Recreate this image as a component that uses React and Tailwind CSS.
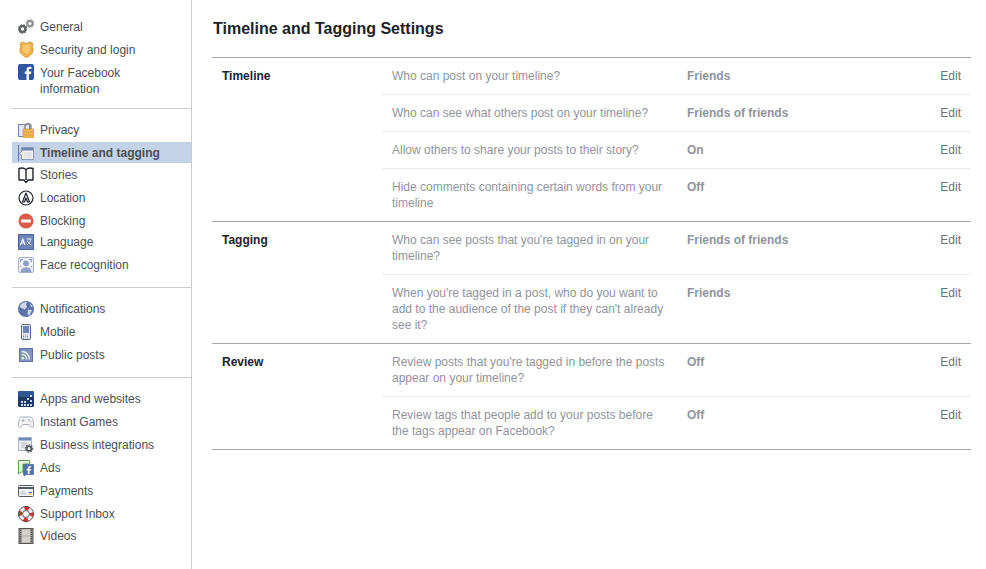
const Gear = ({ cx, cy, r, fill }) => (
  <g>
    <circle cx={cx} cy={cy} r={r * 0.72} fill="none" stroke={fill} strokeWidth={r * 0.56} />
    <circle cx={cx} cy={cy} r={r * 0.95} fill="none" stroke={fill} strokeWidth={r * 0.5} strokeDasharray="1.5 1.1" />
  </g>
);

const icons = {
  general: (
    <>
      <Gear cx={4.5} cy={10} r={4} fill="#5f6266" />
      <Gear cx={12} cy={4.5} r={3.6} fill="#8d9095" />
    </>
  ),
  security: (
    <>
      <path d="M3 0.5 H6 L8.5 1.5 L11 0.5 H14 L15 3 C14 4 14 5 15 6 V9.5 C14 12.5 11 14.3 8.5 15.8 C6 14.3 3 12.5 2 9.5 V6 C3 5 3 4 2 3 Z" fill="#f0b34c" stroke="#cf8e2b" strokeWidth="0.8" />
      <path d="M5 3 H12 V9 L8.5 12.5 L5 9 Z" fill="#f6c76e" />
    </>
  ),
  facebook: (
    <>
      <rect x="0" y="0" width="16" height="16" rx="2" fill="#2f55a4" />
      <path d="M11 16 V10 H13 L13.3 7.6 H11 V6.2 C11 5.4 11.3 5 12.2 5 H13.4 V2.8 H11.6 C9.6 2.8 8.5 4 8.5 5.9 V7.6 H6.8 V10 H8.5 V16 Z" fill="#fff" />
    </>
  ),
  privacy: (
    <>
      <rect x="0.5" y="2.5" width="11" height="12" fill="#e4e9f4" stroke="#6d84b4" />
      <path d="M7 7 V4.5 C7 1 13 1 13 4.5 V7" fill="none" stroke="#8a8d91" strokeWidth="1.6" />
      <rect x="5" y="7" width="11" height="9" fill="#f2b657" stroke="#c98f33" strokeWidth="0.6" />
      <path d="M5 10 H16 M5 13 H16" stroke="#d99d3f" strokeWidth="0.8" />
    </>
  ),
  timeline: (
    <>
      <path d="M0.5 0 V16" stroke="#5f78ad" />
      <path d="M3.5 2.5 H15.5 V14.5 H3.5 V10 L1 8.5 L3.5 7 Z" fill="#f1f1f3" stroke="#8c9cc0" />
      <rect x="4" y="3" width="11" height="2.5" fill="#6d84b4" />
      <path d="M6 8 H13.5 M6 10 H13.5 M6 12 H13.5" stroke="#d4d6da" />
    </>
  ),
  stories: (
    <path d="M8 2.5 C6 0.8 3 0.8 1 1.5 V13 H6 L8 15.5 L10 13 H15 V1.5 C13 0.8 10 0.8 8 2.5 Z M8 2.5 V13" fill="#fff" stroke="#1d2129" strokeWidth="1.4" strokeLinejoin="round" />
  ),
  location: (
    <>
      <circle cx="8" cy="8" r="7" fill="#fff" stroke="#1d2129" strokeWidth="1.2" />
      <path d="M4.5 12 L8 3 L11.5 12 L9.5 12 L8 8 L6.5 12 Z M6.7 9.5 H9.3" fill="#fff" stroke="#1d2129" strokeWidth="1.2" strokeLinejoin="round" />
    </>
  ),
  blocking: (
    <>
      <circle cx="8" cy="8" r="7.5" fill="#dd5b49" />
      <rect x="3" y="6.5" width="10" height="3" rx="0.5" fill="#fff" />
    </>
  ),
  language: (
    <>
      <rect x="0.5" y="0.5" width="15" height="15" fill="#6d84b4" stroke="#4a639a" />
      <path d="M2.5 11 L4.8 5 L7 11 M3.4 9 H6.2" fill="none" stroke="#fff" strokeWidth="1.1" />
      <path d="M8.5 5 H13.5 M11 4 V5 M9 11 C11 9.5 12.3 7.5 12.8 5 M9.3 6.5 C10 8.5 11.5 10 13.5 11" fill="none" stroke="#dfe5f1" strokeWidth="1" />
    </>
  ),
  face: (
    <>
      <rect x="0.5" y="0.5" width="15" height="15" rx="1.5" fill="#eef1f7" stroke="#a3b1cf" />
      <path d="M2.5 5 V2.5 H5 M11 2.5 H13.5 V5 M2.5 9 V10 M13.5 9 V10" fill="none" stroke="#7e93bd" />
      <circle cx="8" cy="6.3" r="2.9" fill="#8ea0c6" />
      <path d="M2.5 15 C3 11 6 10.5 8 10.5 C10 10.5 13 11 13.5 15 Z" fill="#8ea0c6" />
    </>
  ),
  notifications: (
    <>
      <circle cx="8" cy="8" r="8" fill="#5b73a8" />
      <path d="M3 3 C5 1.5 7 1 9 1 L8 3.5 L9 6 L6.5 8.5 L3.5 7 L1.5 6 Z M10 8.5 L14 9 L12 13.5 L10.5 15 L9.5 12 Z M12 2.5 L15 5.5 L13 6 Z" fill="#cfd8ea" />
    </>
  ),
  mobile: (
    <>
      <rect x="3.5" y="0.5" width="9" height="15" rx="1.5" fill="#e9ecf3" stroke="#55688f" />
      <rect x="5" y="2" width="6" height="7" fill="#6d84b4" />
      <path d="M5 11 H11 M5 12.5 H11 M5 14 H11" stroke="#8b93a5" strokeDasharray="1 1" />
    </>
  ),
  rss: (
    <>
      <rect x="1.5" y="1.5" width="13" height="13" fill="#7f94bf" stroke="#5a72a6" />
      <circle cx="4.8" cy="11.2" r="1.3" fill="#e8ecf5" />
      <path d="M3.8 7.4 C6.5 7.4 8.6 9.5 8.6 12.4 M3.8 4.6 C8 4.6 11.4 8 11.4 12.4" fill="none" stroke="#e8ecf5" strokeWidth="1.5" />
    </>
  ),
  apps: (
    <>
      <rect x="0" y="0" width="16" height="16" rx="1.5" fill="#1f3a68" />
      <rect x="0" y="0" width="16" height="6" rx="1.5" fill="#2e5694" />
      <path d="M3 10 h2 v2 h-2 Z M6 10 h2 v2 h-2 Z M3 13 h2 v2 h-2 Z M6 13 h2 v2 h-2 Z M9 13 h2 v2 h-2 Z M9 7 h2 v2 h-2 Z M12 4 h2 v2 h-2 Z M12 9 h2 v2 h-2 Z M12 13 h2 v2 h-2 Z" fill="#c4d6ef" />
    </>
  ),
  games: (
    <>
      <path d="M4 3 H12 C14 3 15 5 15.5 9 C16 13 14.5 14 13.5 13.5 L11 10.5 H5 L2.5 13.5 C1.5 14 0 13 0.5 9 C1 5 2 3 4 3 Z" fill="#f3f4f6" stroke="#a8abb2" />
      <path d="M3.5 6.5 H6.5 M5 5 V8" stroke="#a8abb2" />
      <circle cx="11" cy="6" r="0.9" fill="#8fb4e0" />
      <circle cx="12.7" cy="7.6" r="0.9" fill="#e6b9a6" />
    </>
  ),
  business: (
    <>
      <rect x="0.5" y="0.5" width="13" height="13" fill="#eef0f4" stroke="#a7b3cc" />
      <rect x="1" y="1" width="12" height="2.5" fill="#7189b8" />
      <path d="M3 6 H9 M3 8 H7 M3 10 H6" stroke="#b4b8c1" />
      <circle cx="11" cy="11.5" r="2.4" fill="none" stroke="#55585e" strokeWidth="1.8" />
      <circle cx="11" cy="11.5" r="3.7" fill="none" stroke="#55585e" strokeWidth="1.1" strokeDasharray="1.4 1.4" />
    </>
  ),
  ads: (
    <>
      <path d="M0.5 0.5 H11.5 V4 H5 V12 H3 L0.5 14 Z" fill="#eaf4e2" stroke="#5f9f4a" />
      <path d="M5.5 4.5 H15.5 V14.5 H8.5 L6 16 V14.5 H5.5 Z" fill="#4f6fae" stroke="#3d5a96" strokeWidth="0.6" />
      <path d="M11.5 14 V10.5 H13 L13.2 9 H11.5 V8.2 C11.5 7.7 11.8 7.5 12.3 7.5 H13.2 V6 H12 C10.6 6 9.8 6.8 9.8 8 V9 H8.6 V10.5 H9.8 V14 Z" fill="#fff" />
    </>
  ),
  payments: (
    <>
      <rect x="0.5" y="2.5" width="15" height="11" rx="1" fill="#f3f4f6" stroke="#55585e" />
      <rect x="1" y="4" width="14" height="2" fill="#55585e" />
      <path d="M2.5 9 H7 M2.5 11 H9" stroke="#b4b8c1" />
      <rect x="10.5" y="9" width="3.5" height="1" fill="#5b7bb8" />
      <rect x="10.5" y="10.5" width="3.5" height="1" fill="#e8b33f" />
    </>
  ),
  support: (
    <>
      <circle cx="8" cy="8" r="5.6" fill="none" stroke="#e9e9ec" strokeWidth="4" />
      <circle cx="8" cy="8" r="5.6" fill="none" stroke="#d9332c" strokeWidth="4" strokeDasharray="4.4 4.4" strokeDashoffset="2.2" />
      <circle cx="8" cy="8" r="7.6" fill="none" stroke="#3a3b3f" strokeWidth="0.8" />
      <circle cx="8" cy="8" r="3.4" fill="#fff" stroke="#3a3b3f" strokeWidth="0.8" />
    </>
  ),
  videos: (
    <>
      <rect x="1" y="0.5" width="14" height="15" fill="#a9a6a2" stroke="#55534f" />
      <rect x="4" y="1.5" width="8" height="6" fill="#d4d1cc" />
      <rect x="4" y="8.5" width="8" height="6" fill="#d4d1cc" />
      <path d="M2.5 1.5 V15 M13.5 1.5 V15" stroke="#4b4a47" strokeWidth="1.4" strokeDasharray="1.2 1" />
    </>
  ),
};

const NavIcon = ({ name }) => (
  <svg width="16" height="16" viewBox="0 0 16 16" className="shrink-0">
    {icons[name]}
  </svg>
);

const NavItem = ({ icon, label, h = "h-[23px]", active }) => (
  <div className={`flex items-center pl-[6px] ${h} ${active ? "bg-[#c4d2e7] font-bold" : ""}`}>
    <NavIcon name={icon} />
    <span className="ml-[6px] leading-4">{label}</span>
  </div>
);

const Divider = ({ className }) => <div className={`h-px bg-[#cccccc] ${className}`} />;

const sections = [
  {
    title: "Timeline",
    rows: [
      { q: "Who can post on your timeline?", v: "Friends" },
      { q: "Who can see what others post on your timeline?", v: "Friends of friends" },
      { q: "Allow others to share your posts to their story?", v: "On" },
      { q: "Hide comments containing certain words from your timeline", v: "Off" },
    ],
  },
  {
    title: "Tagging",
    rows: [
      { q: "Who can see posts that you're tagged in on your timeline?", v: "Friends of friends" },
      { q: "When you're tagged in a post, who do you want to add to the audience of the post if they can't already see it?", v: "Friends" },
    ],
  },
  {
    title: "Review",
    rows: [
      { q: "Review posts that you're tagged in before the posts appear on your timeline?", v: "Off" },
      { q: "Review tags that people add to your posts before the tags appear on Facebook?", v: "Off" },
    ],
  },
];

export default function App() {
  return (
    <div className="flex h-[569px] w-[986px] overflow-hidden bg-white font-['Liberation_Sans',Arial,sans-serif] text-xs text-[#4b4f56]">
      <aside className="w-[192px] shrink-0 border-r border-[#cccccc] pl-3 pt-[15px]">
        <NavItem icon="general" label="General" />
        <NavItem icon="security" label="Security and login" />
        <div className="flex h-[40px] items-start pl-[6px] pt-[3px]">
          <NavIcon name="facebook" />
          <span className="ml-[6px] mt-px w-[110px] leading-4">Your Facebook information</span>
        </div>
        <Divider className="mb-[9px] mt-[7px]" />
        <NavItem icon="privacy" label="Privacy" />
        <NavItem icon="timeline" label="Timeline and tagging" h="mt-px h-[21px]" active />
        <NavItem icon="stories" label="Stories" />
        <NavItem icon="location" label="Location" />
        <NavItem icon="blocking" label="Blocking" h="h-[24px]" />
        <NavItem icon="language" label="Language" h="mb-[2px] h-[18px]" />
        <NavItem icon="face" label="Face recognition" />
        <Divider className="mb-[9px] mt-[11px]" />
        <NavItem icon="notifications" label="Notifications" />
        <NavItem icon="mobile" label="Mobile" />
        <NavItem icon="rss" label="Public posts" />
        <Divider className="mb-[9px] mt-[11px]" />
        <NavItem icon="apps" label="Apps and websites" />
        <NavItem icon="games" label="Instant Games" />
        <NavItem icon="business" label="Business integrations" />
        <NavItem icon="ads" label="Ads" />
        <NavItem icon="payments" label="Payments" />
        <NavItem icon="support" label="Support Inbox" />
        <NavItem icon="videos" label="Videos" h="h-[22px]" />
      </aside>

      <main className="w-[779px] pl-5 pt-5">
        <h1 className="ml-px h-[37px] text-base leading-[18px] font-bold text-[#1d2129]">Timeline and Tagging Settings</h1>
        <div className="border-t border-[#a9a9a9]">
          {sections.map((s) => (
            <section key={s.title} className="flex border-b border-[#a9a9a9]">
              <h2 className="w-[170px] shrink-0 pl-[10px] pt-[10px] leading-4 font-bold text-[#1d2129]">{s.title}</h2>
              <div className="flex-1">
                {s.rows.map((r, i) => (
                  <div key={r.q} className={`flex py-[10px] pl-[10px] pr-[10px] leading-4 ${i > 0 ? "border-t border-[#e9ebee]" : ""}`}>
                    <div className="w-[275px] shrink-0 text-[#90949c]">{r.q}</div>
                    <div className="ml-[20px] flex-1 font-bold text-[#90949c]">{r.v}</div>
                    <div className="text-[#6a7180]">Edit</div>
                  </div>
                ))}
              </div>
            </section>
          ))}
        </div>
      </main>
    </div>
  );
}
